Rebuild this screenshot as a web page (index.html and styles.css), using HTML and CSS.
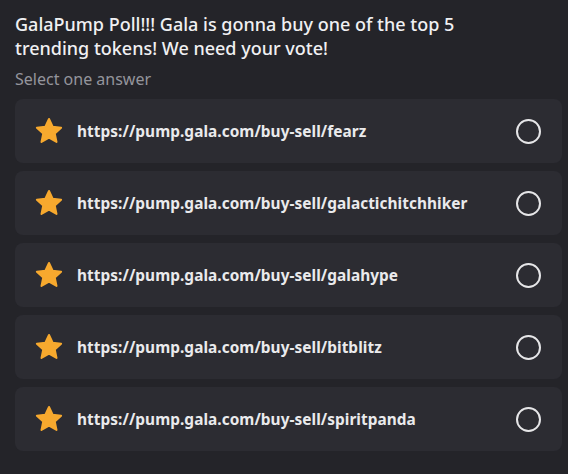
FILE: index.html
```html
<!DOCTYPE html>
<html>
<head>
<meta charset="utf-8">
<link rel="stylesheet" href="styles.css">
</head>
<body>
<div class="poll">
  <div class="question">GalaPump Poll!!! Gala is gonna buy one of the top 5 trending tokens! We need your vote!</div>
  <div class="hint">Select one answer</div>
  <div class="answers">
    <div class="answer">
      <svg class="star" viewBox="0 0 24 24"><path d="M12 2.4l2.9 6.2 6.8.8-5.1 4.6 1.4 6.8L12 17.4l-6 3.4 1.4-6.8-5.1-4.6 6.8-.8z" fill="#f7a92e" stroke="#f7a92e" stroke-width="1.6" stroke-linejoin="round"/></svg>
      <span class="label">https://pump.gala.com/buy-sell/fearz</span>
      <span class="radio"></span>
    </div>
    <div class="answer">
      <svg class="star" viewBox="0 0 24 24"><path d="M12 2.4l2.9 6.2 6.8.8-5.1 4.6 1.4 6.8L12 17.4l-6 3.4 1.4-6.8-5.1-4.6 6.8-.8z" fill="#f7a92e" stroke="#f7a92e" stroke-width="1.6" stroke-linejoin="round"/></svg>
      <span class="label">https://pump.gala.com/buy-sell/galactichitchhiker</span>
      <span class="radio"></span>
    </div>
    <div class="answer">
      <svg class="star" viewBox="0 0 24 24"><path d="M12 2.4l2.9 6.2 6.8.8-5.1 4.6 1.4 6.8L12 17.4l-6 3.4 1.4-6.8-5.1-4.6 6.8-.8z" fill="#f7a92e" stroke="#f7a92e" stroke-width="1.6" stroke-linejoin="round"/></svg>
      <span class="label">https://pump.gala.com/buy-sell/galahype</span>
      <span class="radio"></span>
    </div>
    <div class="answer">
      <svg class="star" viewBox="0 0 24 24"><path d="M12 2.4l2.9 6.2 6.8.8-5.1 4.6 1.4 6.8L12 17.4l-6 3.4 1.4-6.8-5.1-4.6 6.8-.8z" fill="#f7a92e" stroke="#f7a92e" stroke-width="1.6" stroke-linejoin="round"/></svg>
      <span class="label">https://pump.gala.com/buy-sell/bitblitz</span>
      <span class="radio"></span>
    </div>
    <div class="answer">
      <svg class="star" viewBox="0 0 24 24"><path d="M12 2.4l2.9 6.2 6.8.8-5.1 4.6 1.4 6.8L12 17.4l-6 3.4 1.4-6.8-5.1-4.6 6.8-.8z" fill="#f7a92e" stroke="#f7a92e" stroke-width="1.6" stroke-linejoin="round"/></svg>
      <span class="label">https://pump.gala.com/buy-sell/spiritpanda</span>
      <span class="radio"></span>
    </div>
  </div>
</div>
</body>
</html>
```

FILE: styles.css
```css
html, body {
  margin: 0;
  padding: 0;
  background: #242429;
}
body {
  width: 568px;
  height: 474px;
  overflow: hidden;
  font-family: "Noto Sans", "Open Sans", sans-serif;
}
.poll {
  padding: 12px 6px 0 15px;
}
.question {
  color: #f0f0f2;
  font-size: 18px;
  line-height: 24px;
  font-weight: 500;
  width: 500px;
}
.hint {
  color: #94959c;
  font-size: 16px;
  line-height: 20px;
  margin-top: 9px;
}
.answers {
  margin-top: 10px;
  display: flex;
  flex-direction: column;
  gap: 8px;
}
.answer {
  height: 64px;
  background: #2c2c32;
  border-radius: 8px;
  display: flex;
  align-items: center;
  padding: 0 21px 0 20px;
  box-sizing: border-box;
}
.star {
  width: 30px;
  height: 30px;
  margin-left: -1px;
  flex: none;
}
.label {
  margin-left: 13px;
  color: #eaeaec;
  font-size: 15.4px;
  font-weight: 700;
  flex: 1;
  letter-spacing: 0.05px;
}
.radio {
  width: 21px;
  height: 21px;
  border: 2.2px solid #e6e6e8;
  border-radius: 50%;
  flex: none;
}
```
